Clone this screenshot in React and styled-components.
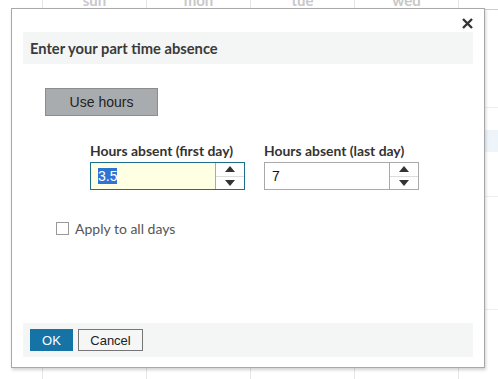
import React from "react";
import styled, { createGlobalStyle } from "styled-components";

const GlobalStyle = createGlobalStyle`
  html, body {
    margin: 0;
    padding: 0;
    background: #fff;
  }
  body {
    font-family: Lato, "Noto Sans", sans-serif;
    width: 498px;
    height: 379px;
    overflow: hidden;
    position: relative;
  }
`;

const days = ["sun", "mon", "tue", "wed", ""];

function Spinner() {
  return (
    <SpinBox>
      <SpinHalf>
        <svg width="10" height="6" viewBox="0 0 10 6">
          <path d="M0 6 L5 0 L10 6 Z" fill="#333" />
        </svg>
      </SpinHalf>
      <SpinHalf $bottom>
        <svg width="10" height="6" viewBox="0 0 10 6">
          <path d="M0 0 L5 6 L10 0 Z" fill="#333" />
        </svg>
      </SpinHalf>
    </SpinBox>
  );
}

function App() {
  return (
    <Page>
      <GlobalStyle />
      <Calendar>
        <Gutter />
        {days.map((d, i) => (
          <DayHead key={i}>{d}</DayHead>
        ))}
        {[0, 1, 2, 3].map((r) => (
          <React.Fragment key={r}>
            <Gutter />
            {days.map((d, i) => (
              <Cell key={i} $highlight={r === 1 && i === 4} />
            ))}
          </React.Fragment>
        ))}
      </Calendar>

      <Dialog>
        <Close>
          <svg width="11" height="11" viewBox="0 0 11 11">
            <path d="M1 1 L10 10 M10 1 L1 10" stroke="#333" strokeWidth="2.4" />
          </svg>
        </Close>
        <HeaderBand>Enter your part time absence</HeaderBand>
        <Body>
          <GreyButton>Use hours</GreyButton>
          <Fields>
            <Field>
              <Label>Hours absent (first day)</Label>
              <NumberBox $focused>
                <Value>
                  <Selected>3.5</Selected>
                </Value>
                <Spinner />
              </NumberBox>
            </Field>
            <Field>
              <Label>Hours absent (last day)</Label>
              <NumberBox>
                <Value>7</Value>
                <Spinner />
              </NumberBox>
            </Field>
          </Fields>
          <CheckRow>
            <Check />
            <CheckLabel>Apply to all days</CheckLabel>
          </CheckRow>
        </Body>
        <FooterBand>
          <OkButton>OK</OkButton>
          <CancelButton>Cancel</CancelButton>
        </FooterBand>
      </Dialog>
    </Page>
  );
}

const Page = styled.div`
  position: relative;
  width: 498px;
  height: 379px;
  overflow: hidden;
`;

const Calendar = styled.div`
  display: grid;
  grid-template-columns: 42px repeat(4, 104px) 40px;
  grid-template-rows: 10px 98px 89px 113px 80px;
`;

const Gutter = styled.div``;

const DayHead = styled.div`
  border-left: 1px solid #e6e6e6;
  border-bottom: 1px solid #ccc;
  text-align: center;
  font-size: 15px;
  font-weight: 700;
  color: #c8c8c8;
  line-height: 14px;
  margin-top: -7px;
  height: 16px;
`;

const Cell = styled.div`
  border-left: 1px solid #e6e6e6;
  border-bottom: 1px solid #eee;
  background: ${(p) =>
    p.$highlight
      ? "linear-gradient(transparent 22px, #eef5fa 22px, #eef5fa 44px, transparent 44px)"
      : "transparent"};
`;

const Dialog = styled.div`
  position: absolute;
  left: 11px;
  top: 8px;
  width: 474px;
  height: 360px;
  box-sizing: border-box;
  border: 1px solid #a8a8a8;
  background: #fff;
  box-shadow: 1px 2px 3px rgba(0, 0, 0, 0.18);
  display: flex;
  flex-direction: column;
  padding: 23px 11px 10px 11px;
`;

const Close = styled.div`
  position: absolute;
  top: 9px;
  right: 11px;
  width: 11px;
  height: 11px;
  display: flex;
`;

const HeaderBand = styled.div`
  height: 32px;
  background: #f4f5f5;
  display: flex;
  align-items: center;
  padding-left: 7px;
  font-size: 14.7px;
  font-weight: 700;
  color: #3a3a3a;
  border-radius: 2px;
`;

const Body = styled.div`
  flex: 1;
  display: flex;
  flex-direction: column;
  align-items: flex-start;
  padding: 24px 0 0 22px;
`;

const GreyButton = styled.button`
  width: 113px;
  height: 28px;
  background: #a8acaf;
  border: 1px solid #8a8d90;
  font-family: "Liberation Sans", Arial, sans-serif;
  font-size: 14px;
  color: #222;
  padding: 0;
`;

const Fields = styled.div`
  display: flex;
  gap: 19px;
  margin: 27px 0 0 45px;
`;

const Field = styled.div`
  display: flex;
  flex-direction: column;
  gap: 4px;
`;

const Label = styled.div`
  font-size: 13.9px;
  font-weight: 700;
  color: #333;
  line-height: 15px;
`;

const NumberBox = styled.div`
  display: flex;
  width: 155px;
  height: 28px;
  box-sizing: border-box;
  border: 1px solid ${(p) => (p.$focused ? "#1b6f8c" : "#a9a9a9")};
  background: ${(p) => (p.$focused ? "#ffffe4" : "#fff")};
`;

const Value = styled.div`
  flex: 1;
  display: flex;
  align-items: center;
  padding-left: 7px;
  font-family: "Liberation Sans", Arial, sans-serif;
  font-size: 14px;
  color: #111;
`;

const Selected = styled.span`
  background: #3074d3;
  color: #fff;
  line-height: 16px;
`;

const SpinBox = styled.div`
  width: 28px;
  display: flex;
  flex-direction: column;
  border-left: 1px solid #a9a9a9;
  background: #fff;
`;

const SpinHalf = styled.div`
  flex: 1;
  display: flex;
  align-items: center;
  justify-content: center;
  border-top: ${(p) => (p.$bottom ? "1px solid #ddd" : "none")};
`;

const CheckRow = styled.div`
  display: flex;
  align-items: center;
  gap: 6px;
  margin: 30px 0 0 11px;
`;

const Check = styled.div`
  width: 13px;
  height: 13px;
  box-sizing: border-box;
  border: 1px solid #999;
  background: #fff;
`;

const CheckLabel = styled.div`
  font-size: 14px;
  color: #555;
`;

const FooterBand = styled.div`
  height: 34px;
  background: #f4f5f5;
  display: flex;
  align-items: center;
  gap: 5px;
  padding-left: 7px;
`;

const OkButton = styled.button`
  width: 43px;
  height: 22px;
  background: #1573a6;
  border: none;
  color: #fff;
  font-family: "Liberation Sans", Arial, sans-serif;
  font-size: 13px;
  padding: 0;
`;

const CancelButton = styled.button`
  width: 65px;
  height: 22px;
  background: #f6f6f6;
  border: 1px solid #767676;
  color: #222;
  font-family: "Liberation Sans", Arial, sans-serif;
  font-size: 13px;
  padding: 0;
`;

export default App;
